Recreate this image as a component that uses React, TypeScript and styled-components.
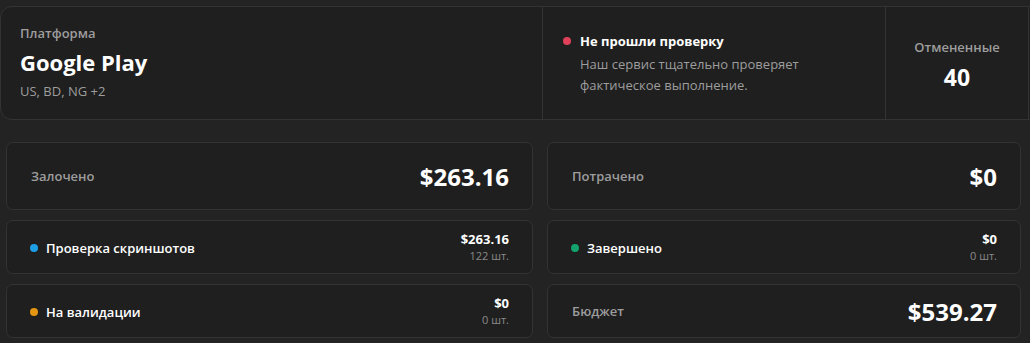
import React from "react";
import styled, { createGlobalStyle } from "styled-components";

const Global = createGlobalStyle`
  html, body { margin: 0; padding: 0; background: #232323; overflow: hidden; }
  body { font-family: "Open Sans", "Noto Sans", sans-serif; color: #fff; }
  * { box-sizing: border-box; }
`;

const Page = styled.div`
  width: 1030px;
  height: 343px;
  padding-top: 6px;
  overflow: hidden;
`;

const TopCard = styled.section`
  display: grid;
  grid-template-columns: 541px 343px 143px 200px;
  width: 1240px;
  height: 114px;
  background: #1f1f1f;
  border: 1px solid #333;
  border-radius: 12px;
`;

const Cell = styled.div<{ $center?: boolean; $divider?: boolean }>`
  display: flex;
  flex-direction: column;
  ${(p) => (p.$divider ? "border-left: 1px solid #333;" : "")}
  ${(p) =>
    p.$center
      ? "align-items: center; justify-content: center;"
      : ""}
`;

const PlatformCell = styled(Cell)`
  padding: 17px 20px 0 19px;
`;

const SmallLabel = styled.div`
  font-size: 13px;
  font-weight: 600;
  color: #9d9d9d;
  line-height: 18px;
`;

const BigTitle = styled.div`
  font-size: 22px;
  font-weight: 700;
  color: #fff;
  line-height: 30px;
  margin-top: 5px;
`;

const SubText = styled.div`
  font-size: 13px;
  color: #9d9d9d;
  line-height: 18px;
  margin-top: 5px;
`;

const NoticeCell = styled(Cell)`
  padding: 24px 20px 0 20px;
`;

const NoticeHead = styled.div`
  display: flex;
  align-items: center;
  gap: 9px;
  font-size: 13px;
  font-weight: 700;
  line-height: 20px;
`;

const Dot = styled.span<{ $color: string }>`
  width: 8px;
  height: 8px;
  border-radius: 50%;
  background: ${(p) => p.$color};
  flex: none;
`;

const NoticeText = styled.div`
  font-size: 13px;
  color: #9d9d9d;
  line-height: 21px;
  padding-left: 17px;
  margin-top: 3px;
`;

const CountCell = styled(Cell)`
  padding-top: 3px;
`;

const CountValue = styled.div`
  font-size: 23px;
  font-weight: 700;
  line-height: 30px;
  margin-top: 6px;
`;

const Columns = styled.div`
  display: grid;
  grid-template-columns: 527px 474px;
  column-gap: 14px;
  margin: 22px 0 0 6px;
`;

const Column = styled.div`
  display: flex;
  flex-direction: column;
  gap: 10px;
`;

const Card = styled.div<{ $h: number }>`
  height: ${(p) => p.$h}px;
  display: flex;
  align-items: center;
  justify-content: space-between;
  padding: 0 23px 0 23px;
  background: #1f1f1f;
  border: 1px solid #333;
  border-radius: 7px;
`;

const CardLabel = styled.div`
  font-size: 13px;
  font-weight: 600;
  color: #9d9d9d;
  padding-left: 1px;
`;

const CardValue = styled.div`
  font-size: 24px;
  font-weight: 700;
  color: #fff;
`;

const ItemLabel = styled.div`
  display: flex;
  align-items: center;
  gap: 8px;
  font-size: 13px;
  font-weight: 600;
  padding-top: 1px;
`;

const ItemRight = styled.div`
  display: flex;
  flex-direction: column;
  align-items: flex-end;
`;

const ItemValue = styled.div`
  font-size: 13px;
  font-weight: 700;
  line-height: 18px;
`;

const ItemCount = styled.div`
  font-size: 11px;
  color: #8a8a8a;
  line-height: 16px;
`;

type Big = { kind: "big"; label: string; value: string };
type Item = { kind: "item"; label: string; value: string; count: string; color: string };
type Row = Big | Item;

const left: Row[] = [
  { kind: "big", label: "Залочено", value: "$263.16" },
  { kind: "item", label: "Проверка скриншотов", value: "$263.16", count: "122 шт.", color: "#1d9fe6" },
  { kind: "item", label: "На валидации", value: "$0", count: "0 шт.", color: "#e49512" },
];
const right: Row[] = [
  { kind: "big", label: "Потрачено", value: "$0" },
  { kind: "item", label: "Завершено", value: "$0", count: "0 шт.", color: "#12a36e" },
  { kind: "big", label: "Бюджет", value: "$539.27" },
];

const heights = [68, 54, 54];

function Rows({ rows }: { rows: Row[] }) {
  return (
    <Column>
      {rows.map((r, i) =>
        r.kind === "big" ? (
          <Card key={i} $h={heights[i]}>
            <CardLabel>{r.label}</CardLabel>
            <CardValue>{r.value}</CardValue>
          </Card>
        ) : (
          <Card key={i} $h={heights[i]}>
            <ItemLabel>
              <Dot $color={r.color} />
              {r.label}
            </ItemLabel>
            <ItemRight>
              <ItemValue>{r.value}</ItemValue>
              <ItemCount>{r.count}</ItemCount>
            </ItemRight>
          </Card>
        )
      )}
    </Column>
  );
}

export default function App() {
  return (
    <Page>
      <Global />
      <TopCard>
        <PlatformCell>
          <SmallLabel>Платформа</SmallLabel>
          <BigTitle>Google Play</BigTitle>
          <SubText>US, BD, NG +2</SubText>
        </PlatformCell>
        <NoticeCell $divider>
          <NoticeHead>
            <Dot $color="#e0405a" />
            Не прошли проверку
          </NoticeHead>
          <NoticeText>
            Наш сервис тщательно проверяет
            <br />
            фактическое выполнение.
          </NoticeText>
        </NoticeCell>
        <CountCell $divider $center>
          <SmallLabel>Отмененные</SmallLabel>
          <CountValue>40</CountValue>
        </CountCell>
        <Cell $divider />
      </TopCard>
      <Columns>
        <Rows rows={left} />
        <Rows rows={right} />
      </Columns>
    </Page>
  );
}
